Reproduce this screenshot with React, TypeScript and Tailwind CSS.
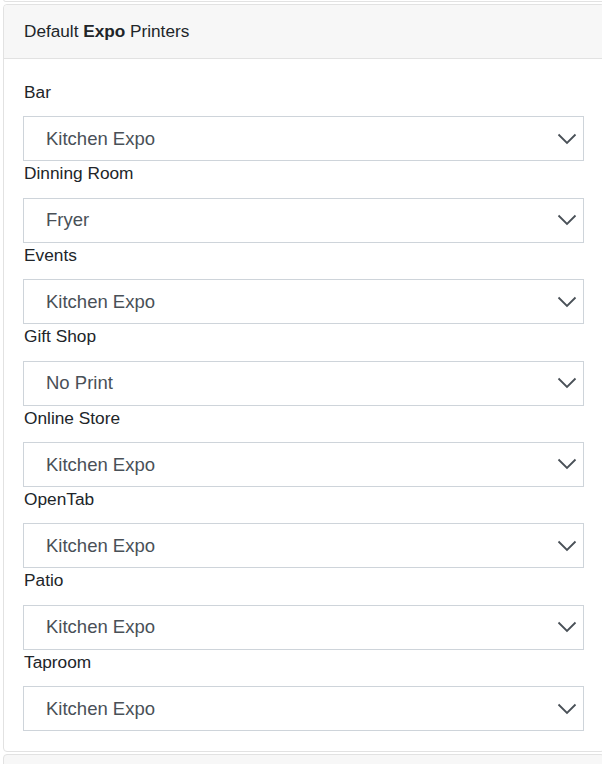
const rows = [
  { label: "Bar", value: "Kitchen Expo" },
  { label: "Dinning Room", value: "Fryer" },
  { label: "Events", value: "Kitchen Expo" },
  { label: "Gift Shop", value: "No Print" },
  { label: "Online Store", value: "Kitchen Expo" },
  { label: "OpenTab", value: "Kitchen Expo" },
  { label: "Patio", value: "Kitchen Expo" },
  { label: "Taproom", value: "Kitchen Expo" },
]

const Chevron = () => (
  <svg width="20" height="12" viewBox="0 0 20 12" fill="none" className="shrink-0">
    <path d="M1.5 1.5 L10 10 L18.5 1.5" stroke="#495057" strokeWidth="1.8" />
  </svg>
)

export default function App() {
  return (
    <div
      className="w-[602px] h-[764px] overflow-hidden bg-white text-[#212529]"
      style={{ fontFamily: '"Liberation Sans", Arial, sans-serif' }}
    >
      <div className="ml-[3px] w-[602px] h-[3px] -mt-[1px] border border-t-0 border-[#e2e2e2] rounded-b-[4px]" />
      <div className="ml-[3px] mt-[2px] w-[602px] border border-[#e2e2e2] rounded-[4px]">
        <div className="h-[54px] bg-[#f7f7f7] border-b border-[#e2e2e2] rounded-t-[4px] flex items-center px-[20px] text-[17.2px]">
          <span>
            Default <b>Expo</b> Printers
          </span>
        </div>
        <div className="px-[19px] pt-[21px] pb-[20px]">
          {rows.map((r) => (
            <div key={r.label} className="flex flex-col">
              <label className="pl-[1px] leading-[25px] text-[17.3px] mb-[11.4px]">{r.label}</label>
              <div className="h-[45px] w-[561px] border border-[#ced4da] flex items-center justify-between pl-[22px] pr-[6px] text-[18.5px] text-[#495057]">
                <span>{r.value}</span>
                <Chevron />
              </div>
            </div>
          ))}
        </div>
      </div>
      <div className="ml-[3px] mt-[2px] w-[602px] h-[40px] border border-[#e2e2e2] rounded-t-[4px] bg-[#f7f7f7]" />
    </div>
  )
}
